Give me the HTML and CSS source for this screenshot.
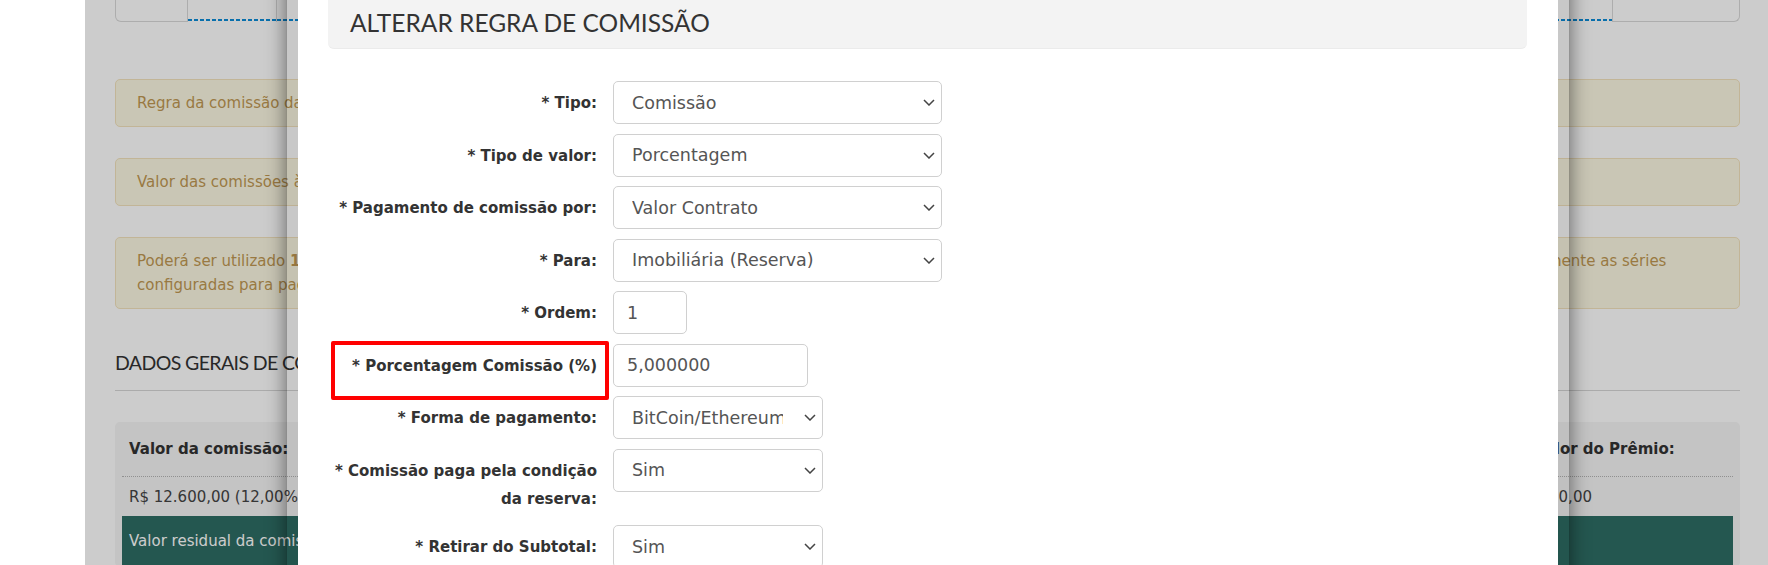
FILE: index.html
```html
<!DOCTYPE html>
<html lang="pt-BR">
<head>
<meta charset="utf-8">
<title>Alterar regra de comissão</title>
<link rel="stylesheet" href="styles.css">
</head>
<body>
<aside class="sidebar"></aside>
<main class="page">
  <div class="steps">
    <div class="step step-first"></div>
    <div class="step step-second"></div>
    <div class="step step-line"></div>
    <div class="step step-last"></div>
  </div>

  <div class="alert alert-first">Regra da comissão da reserva.</div>
  <div class="alert">Valor das comissões à pagar.</div>
  <div class="alert">Poderá ser utilizado <strong>1</strong> plano de comissão por reserva. Caso existam outras regras cadastradas, o sistema considerará a ordem definida em cada regra para o cálculo do valor e utilizará somente as séries<br>configuradas para pagamento da comissão.</div>

  <h3 class="section-title">DADOS GERAIS DE COMISSÃO</h3>

  <div class="panel">
    <table class="summary">
      <colgroup>
        <col class="col-a"><col class="col-b"><col class="col-c"><col class="col-d">
      </colgroup>
      <thead>
        <tr><th>Valor da comissão:</th><th>Valor pago:</th><th>Valor a pagar:</th><th>Valor do Prêmio:</th></tr>
      </thead>
      <tbody>
        <tr><td>R$ 12.600,00 (12,00%)</td><td>R$ 0,00</td><td>R$ 12.600,00</td><td>R$ 0,00</td></tr>
        <tr class="residual"><td colspan="4">Valor residual da comissão: R$ 12.600,00</td></tr>
      </tbody>
    </table>
  </div>

  <div class="backdrop"></div>

  <div class="modal">
    <div class="modal-header">
      <h4 class="modal-title">ALTERAR REGRA DE COMISSÃO</h4>
    </div>
    <form class="form">
      <label class="label">* Tipo:</label>
      <div class="select select-lg"><span class="select-text">Comissão</span><svg class="chev" viewBox="0 0 12 7" width="12" height="7"><path d="M1 1 L6 6 L11 1"/></svg></div>

      <label class="label">* Tipo de valor:</label>
      <div class="select select-lg"><span class="select-text">Porcentagem</span><svg class="chev" viewBox="0 0 12 7" width="12" height="7"><path d="M1 1 L6 6 L11 1"/></svg></div>

      <label class="label">* Pagamento de comissão por:</label>
      <div class="select select-lg"><span class="select-text">Valor Contrato</span><svg class="chev" viewBox="0 0 12 7" width="12" height="7"><path d="M1 1 L6 6 L11 1"/></svg></div>

      <label class="label">* Para:</label>
      <div class="select select-lg"><span class="select-text">Imobiliária (Reserva)</span><svg class="chev" viewBox="0 0 12 7" width="12" height="7"><path d="M1 1 L6 6 L11 1"/></svg></div>

      <label class="label">* Ordem:</label>
      <div class="input input-sm">1</div>

      <label class="label label-marked">* Porcentagem Comissão (%)</label>
      <div class="input input-md">5,000000</div>

      <label class="label">* Forma de pagamento:</label>
      <div class="select select-md"><span class="select-text">BitCoin/Ethereum</span><svg class="chev" viewBox="0 0 12 7" width="12" height="7"><path d="M1 1 L6 6 L11 1"/></svg></div>

      <label class="label">* Comissão paga pela condição da reserva:</label>
      <div class="select select-md"><span class="select-text">Sim</span><svg class="chev" viewBox="0 0 12 7" width="12" height="7"><path d="M1 1 L6 6 L11 1"/></svg></div>

      <label class="label">* Retirar do Subtotal:</label>
      <div class="select select-md"><span class="select-text">Sim</span><svg class="chev" viewBox="0 0 12 7" width="12" height="7"><path d="M1 1 L6 6 L11 1"/></svg></div>
    </form>
  </div>
</main>
</body>
</html>
```

FILE: styles.css
```css
* { box-sizing: border-box; }

html, body {
  margin: 0;
  height: 565px;
  overflow: hidden;
}

body {
  display: flex;
  background: #fff;
  font-family: "DejaVu Sans", Verdana, sans-serif;
  font-size: 15px;
  color: #333;
}

.sidebar {
  width: 85px;
  flex: none;
  background: #fff;
}

.page {
  flex: 1;
  position: relative;
  overflow: hidden;
  padding: 0 28px 0 30px;
  background: #fff;
}

/* step bar (scrolled, only its bottom is visible) */
.steps {
  display: flex;
  height: 22px;
}
.step { height: 22px; }
.step-first {
  width: 73px;
  border: 1px solid #d9d9d9;
  border-top: 0;
  border-radius: 0 0 0 6px;
}
.step-second {
  width: 89px;
  border-right: 1px solid #d9d9d9;
}
.step-line { flex: 1; }
.step-second,
.step-line {
  background: repeating-linear-gradient(90deg, #0b8bd8 0 4px, transparent 4px 6px) left 0 bottom 1px / 100% 2px no-repeat;
}
.step-last {
  width: 128px;
  border: 1px solid #d9d9d9;
  border-top: 0;
  border-radius: 0 0 6px 0;
}

/* alerts */
.alert {
  margin-top: 31px;
  padding: 11px 21px;
  border: 1px solid #f3e3bd;
  border-radius: 5px;
  background: #fcf8e3;
  color: #c09853;
  line-height: 24px;
}
.alert-first { margin-top: 57px; }
.alert strong { font-weight: bold; }

.section-title {
  margin: 41px 0 0;
  padding-bottom: 15px;
  border-bottom: 1px solid #d6d6d6;
  font-family: Lato, "DejaVu Sans", sans-serif;
  font-weight: 400;
  font-size: 19.5px;
  line-height: 25px;
  letter-spacing: -0.6px;
  color: #333;
}

/* summary panel */
.panel {
  margin-top: 31px;
  padding: 0 7px;
  background: #f5f5f5;
  border-radius: 5px;
}
.summary {
  width: 100%;
  table-layout: fixed;
  border-collapse: collapse;
}
.col-a { width: 500px; }
.col-b { width: 500px; }
.col-c { width: 404px; }
.col-d { width: 206px; }
.summary th {
  padding: 15px 7px;
  line-height: 24px;
  text-align: left;
  font-weight: bold;
  color: #333;
  border-bottom: 1px dotted #b5b5b5;
}
.summary td {
  padding: 7.5px 7px;
  line-height: 24px;
  color: #444;
}
.summary .residual td {
  padding: 13px 7px 14px;
  background: #2e6d64;
  color: #fff;
}

/* backdrop + modal */
.backdrop {
  position: absolute;
  inset: 0;
  background: rgba(0, 0, 0, 0.2);
}

.modal {
  position: absolute;
  top: -60px;
  left: 201px;
  width: 1284px;
  padding-bottom: 60px;
  border: 12px solid rgba(0, 0, 0, 0.02);
  border-radius: 6px;
  background: #fff;
  background-clip: padding-box;
  box-shadow: 0 6px 19px rgba(0, 0, 0, 0.5);
}

.modal-header {
  margin: 0 31px 0 30px;
  padding: 55.5px 22px 10.5px;
  background: #f3f3f3;
  border-bottom: 1px solid #ebebeb;
  border-radius: 0 0 6px 6px;
}
.modal-title {
  margin: 0;
  font-family: Lato, "DejaVu Sans", sans-serif;
  font-weight: 400;
  font-size: 24.5px;
  line-height: 30px;
  color: #333;
}

.form {
  display: grid;
  grid-template-columns: 299px max-content;
  column-gap: 16px;
  row-gap: 9.5px;
  align-items: start;
  padding-top: 32px;
}

.label {
  position: relative;
  padding: 8px 0 0 19px;
  margin-bottom: 3px;
  text-align: right;
  font-weight: bold;
  font-size: 15px;
  line-height: 28px;
  color: #333;
}
.label-marked::after {
  content: "";
  position: absolute;
  left: 33px;
  right: -12px;
  top: -3px;
  height: 51px;
  border: 4px solid #ff0000;
  border-radius: 2px;
}

.select,
.input {
  display: flex;
  align-items: center;
  height: 43px;
  border: 1px solid #d0d0d0;
  border-radius: 5px;
  background: #fff;
  font-size: 17.5px;
  color: #555;
}
.select {
  padding: 0 6px 0 18px;
  gap: 21px;
}
.select-text {
  flex: 1;
  min-width: 0;
  overflow: hidden;
  white-space: nowrap;
}
.chev {
  flex: none;
  fill: none;
  stroke: #444;
  stroke-width: 1.5;
}
.select-lg { width: 329px; }
.select-md { width: 210px; }

.input { padding: 0 13px; }
.input-sm { width: 74px; }
.input-md { width: 195px; }
```
